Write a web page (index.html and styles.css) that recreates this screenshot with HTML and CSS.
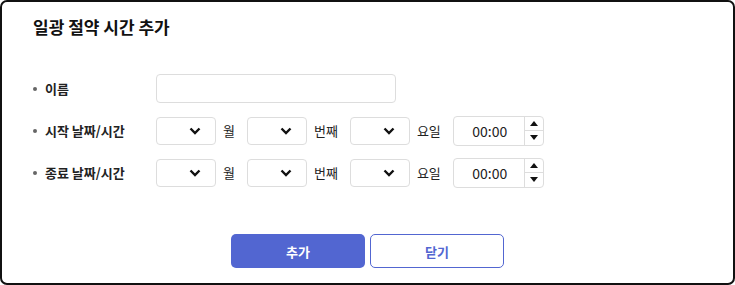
FILE: index.html
```html
<!DOCTYPE html>
<html>
  <head>
    <meta name="viewport" content="width=device-width, initial-scale=1.0">
    <title>일광 절약 시간 추가</title>
    <link rel="stylesheet" href="styles.css">
  </head>
  <body>
    <div class="dialog">
      <p class="title">일광 절약 시간 추가</p>

      <div class="form">
        <div class="row">
          <span class="label">이름</span>
          <div class="text-input"></div>
        </div>

        <div class="row">
          <span class="label">시작 날짜/시간</span>
          <div class="select"><svg viewBox="0 0 12 8"><path d="M1.5 1.5 L6 6 L10.5 1.5" /></svg></div>
          <span class="unit">월</span>
          <div class="select"><svg viewBox="0 0 12 8"><path d="M1.5 1.5 L6 6 L10.5 1.5" /></svg></div>
          <span class="unit">번째</span>
          <div class="select"><svg viewBox="0 0 12 8"><path d="M1.5 1.5 L6 6 L10.5 1.5" /></svg></div>
          <span class="unit">요일</span>
          <div class="time">
            <span class="time-value">00:00</span>
            <div class="spin">
              <span class="spin-up"></span>
              <span class="spin-down"></span>
            </div>
          </div>
        </div>

        <div class="row">
          <span class="label">종료 날짜/시간</span>
          <div class="select"><svg viewBox="0 0 12 8"><path d="M1.5 1.5 L6 6 L10.5 1.5" /></svg></div>
          <span class="unit">월</span>
          <div class="select"><svg viewBox="0 0 12 8"><path d="M1.5 1.5 L6 6 L10.5 1.5" /></svg></div>
          <span class="unit">번째</span>
          <div class="select"><svg viewBox="0 0 12 8"><path d="M1.5 1.5 L6 6 L10.5 1.5" /></svg></div>
          <span class="unit">요일</span>
          <div class="time">
            <span class="time-value">00:00</span>
            <div class="spin">
              <span class="spin-up"></span>
              <span class="spin-down"></span>
            </div>
          </div>
        </div>
      </div>

      <div class="buttons">
        <button class="btn btn-primary">추가</button>
        <button class="btn btn-outline">닫기</button>
      </div>
    </div>
  </body>
</html>
```

FILE: styles.css
```css
body {
  margin: 0;
  font-family: "Noto Sans CJK KR", "Noto Sans", sans-serif;
  color: #222;
}
.dialog {
  box-sizing: border-box;
  width: 735px;
  height: 285px;
  border: 2px solid #111;
  border-radius: 7px;
  background-color: white;
  padding: 11px 0 0 31px;
}
.title {
  margin: 0;
  font-size: 17px;
  font-weight: bold;
  line-height: 27px;
  color: #111;
}
.form {
  display: flex;
  flex-direction: column;
  gap: 13px;
  margin-top: 34px;
}
.row {
  display: flex;
  align-items: center;
  height: 29px;
}
.label {
  width: 123px;
  font-size: 13px;
  font-weight: 600;
  display: flex;
  align-items: center;
}
.label::before {
  content: "";
  width: 4px;
  height: 4px;
  border-radius: 50%;
  background-color: #666;
  margin-right: 8px;
}
.text-input {
  box-sizing: border-box;
  width: 240px;
  height: 29px;
  border: 1px solid #ddd;
  border-radius: 4px;
}
.select {
  box-sizing: border-box;
  width: 60px;
  height: 28px;
  border: 1px solid #ddd;
  border-radius: 4px;
  display: flex;
  align-items: center;
  justify-content: flex-end;
  padding-right: 14px;
}
.select svg {
  width: 12px;
  height: 8px;
}
.select path {
  fill: none;
  stroke: #111;
  stroke-width: 2.4;
}
.unit {
  font-size: 13px;
  margin: 0 12px 0 7px;
}
.time {
  box-sizing: border-box;
  width: 91px;
  height: 30px;
  border: 1px solid #ddd;
  border-radius: 4px;
  display: flex;
  align-items: stretch;
}
.time-value {
  flex: 1;
  font-size: 14px;
  display: flex;
  align-items: center;
  justify-content: center;
  padding-left: 2px;
}
.spin {
  width: 18px;
  border-left: 1px solid #ddd;
  display: flex;
  flex-direction: column;
}
.spin-up,
.spin-down {
  flex: 1;
  display: flex;
  align-items: center;
  justify-content: center;
}
.spin-down {
  border-top: 1px solid #ddd;
}
.spin-up::after {
  content: "";
  border-left: 4px solid transparent;
  border-right: 4px solid transparent;
  border-bottom: 5px solid #111;
}
.spin-down::after {
  content: "";
  border-left: 4px solid transparent;
  border-right: 4px solid transparent;
  border-top: 5px solid #111;
}
.buttons {
  display: flex;
  justify-content: center;
  gap: 5px;
  margin-top: 47px;
  margin-left: -31px;
}
.btn {
  box-sizing: border-box;
  width: 134px;
  height: 34px;
  border-radius: 5px;
  font-family: "Noto Sans CJK KR", "Noto Sans", sans-serif;
  font-size: 13px;
  font-weight: bold;
  cursor: pointer;
}
.btn-primary {
  border: none;
  background-color: #5266d1;
  color: white;
}
.btn-outline {
  border: 1px solid #5266d1;
  background-color: white;
  color: #5266d1;
}
```
